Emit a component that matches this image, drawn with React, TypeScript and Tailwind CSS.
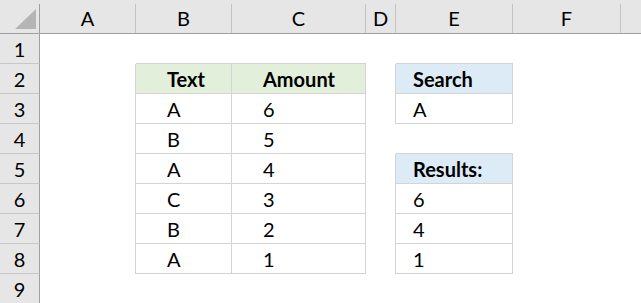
import clsx from "clsx";

const cols = ["A", "B", "C", "D", "E", "F", ""];

type Cell = { t: string; bold?: boolean; fill?: "green" | "blue" };

// row -> column -> cell
const data: Record<number, Record<string, Cell>> = {
  2: {
    B: { t: "Text", bold: true, fill: "green" },
    C: { t: "Amount", bold: true, fill: "green" },
    E: { t: "Search", bold: true, fill: "blue" },
  },
  3: { B: { t: "A" }, C: { t: "6" }, E: { t: "A" } },
  4: { B: { t: "B" }, C: { t: "5" } },
  5: { B: { t: "A" }, C: { t: "4" }, E: { t: "Results:", bold: true, fill: "blue" } },
  6: { B: { t: "C" }, C: { t: "3" }, E: { t: "6" } },
  7: { B: { t: "B" }, C: { t: "2" }, E: { t: "4" } },
  8: { B: { t: "A" }, C: { t: "1" }, E: { t: "1" } },
};

const eRows = [2, 3, 5, 6, 7, 8];

const App = () => {
  const rows = [1, 2, 3, 4, 5, 6, 7, 8, 9];
  return (
    <div className="w-[641px] h-[303px] overflow-hidden bg-white font-['Lato','Liberation_Sans',sans-serif] text-[20px] text-black">
      <div className="grid grid-cols-[40px_96px_96px_134px_30px_117px_108px_1fr] grid-rows-[34px_repeat(9,30px)]">
        {/* corner */}
        <div className="bg-[#e6e6e6] border-b border-[#a0a0a0] flex items-end">
          <div className="h-[29px] w-full border-r border-[#a0a0a0] relative">
            <svg className="absolute left-0 top-0" width="40" height="29" viewBox="0 0 40 29">
              <polygon points="15,25 36,25 36,5" fill="#b5b5b5" />
            </svg>
          </div>
        </div>
        {cols.map((c) => (
          <div key={c || "G"} className="bg-[#e6e6e6] border-b border-[#a0a0a0] flex items-end">
            <div
              className={clsx(
                "h-[29px] w-full flex items-center justify-center leading-none pb-[2px]",
                c && "border-r border-[#c4c4c4]"
              )}
            >
              {c}
            </div>
          </div>
        ))}

        {rows.map((r) => (
          <div key={r} className="contents">
            <div className="bg-[#e6e6e6] border-r border-[#a0a0a0] border-b border-b-[#c8c8c8] flex items-center justify-center leading-[30px]">
              {r}
            </div>
            {cols.map((c) => {
              const cell = data[r]?.[c];
              const inBC = r >= 2 && r <= 8;
              const inE = eRows.includes(r);
              const right =
                ((c === "A" || c === "B" || c === "C") && inBC) || ((c === "D" || c === "E") && inE);
              const bottom = ((c === "B" || c === "C") && r >= 1 && r <= 8) || (c === "E" && r >= 1 && r <= 8);
              return (
                <div
                  key={c || "G"}
                  className={clsx(
                    "flex items-center leading-[30px] whitespace-nowrap",
                    right && "border-r border-r-[#d4d4d4]",
                    bottom && "border-b border-b-[#d4d4d4]",
                    (c === "B" || c === "C") && "pl-[31px]",
                    c === "E" && "pl-[17px]",
                    cell?.bold && "font-bold",
                    cell?.fill === "green" && "bg-[#e2efda]",
                    cell?.fill === "blue" && "bg-[#ddebf7]"
                  )}
                >
                  {cell?.t}
                </div>
              );
            })}
          </div>
        ))}
      </div>
    </div>
  );
};

export default App;
